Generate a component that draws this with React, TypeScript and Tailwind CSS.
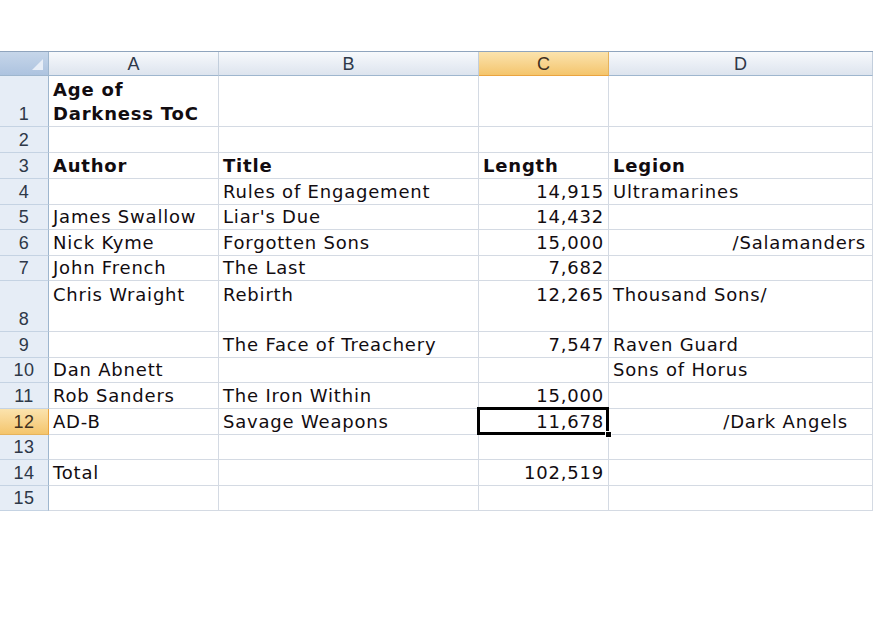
import React from "react";

type Row = {
  n: number;
  h: number;
  a?: string;
  b?: string;
  c?: string;
  d?: string;
  dRight?: string;
  bold?: boolean;
  top?: boolean;
};

const rows: Row[] = [
  { n: 1, h: 51, a: "Age of\nDarkness ToC", bold: true },
  { n: 2, h: 26 },
  { n: 3, h: 26, a: "Author", b: "Title", c: "Length", d: "Legion", bold: true },
  { n: 4, h: 26, b: "Rules of Engagement", c: "14,915", d: "Ultramarines" },
  { n: 5, h: 25, a: "James Swallow", b: "Liar's Due", c: "14,432" },
  { n: 6, h: 26, a: "Nick Kyme", b: "Forgotten Sons", c: "15,000", dRight: "/Salamanders" },
  { n: 7, h: 25, a: "John French", b: "The Last", c: "7,682" },
  { n: 8, h: 51, a: "Chris Wraight", b: "Rebirth", c: "12,265", d: "Thousand Sons/", top: true },
  { n: 9, h: 26, b: "The Face of Treachery", c: "7,547", d: "Raven Guard" },
  { n: 10, h: 25, a: "Dan Abnett", d: "Sons of Horus" },
  { n: 11, h: 26, a: "Rob Sanders", b: "The Iron Within", c: "15,000" },
  { n: 12, h: 26, a: "AD-B", b: "Savage Weapons", c: "11,678", dRight: "/Dark Angels" },
  { n: 13, h: 25 },
  { n: 14, h: 26, a: "Total", c: "102,519" },
  { n: 15, h: 25 },
];

const cols = [
  { key: "A", w: "w-[170px]" },
  { key: "B", w: "w-[260px]" },
  { key: "C", w: "w-[130px]" },
  { key: "D", w: "flex-1" },
];

const Cell = ({
  w,
  text,
  right,
  bold,
  top,
  pr,
}: {
  w: string;
  text?: string;
  right?: boolean;
  bold?: boolean;
  top?: boolean;
  pr?: string;
}) => (
  <div
    className={`${w} shrink-0 flex flex-col border-r border-b border-[#d4dae3] px-[4px] ${
      top ? "justify-start pt-[2px]" : "justify-end"
    } ${right ? "items-end" : "items-start"} ${pr ?? ""}`}
  >
    {text &&
      text.split("\n").map((line) => (
        <span
          key={line}
          className={`leading-[24px] whitespace-nowrap ${bold ? "font-bold" : ""}`}
        >
          {line}
        </span>
      ))}
  </div>
);

export default function App() {
  return (
    <div
      className="w-[873px] h-[627px] bg-white overflow-hidden pt-[51px] text-[18px] tracking-[0.8px] text-[#120c10]"
      style={{ fontFamily: '"DejaVu Sans", Verdana, sans-serif' }}
    >
      {/* column headers */}
      <div className="flex h-[25px] border-t border-[#8fa4bd]">
        <div className="w-[49px] shrink-0 relative bg-gradient-to-b from-[#c6d6ea] to-[#adc3df] border-r border-b border-[#9eb6ce]">
          <div className="absolute right-[5px] bottom-[5px] w-0 h-0 border-l-[11px] border-l-transparent border-b-[11px] border-b-[#e8eef7]" />
        </div>
        {cols.map((c) => (
          <div
            key={c.key}
            className={`${c.w} shrink-0 flex items-center justify-center pt-[1px] text-[18px] tracking-normal border-r border-b ${
              c.key === "C"
                ? "bg-gradient-to-b from-[#fbe3ad] to-[#f4c56c] border-r-[#e6b35c] border-b-[#eaa440] text-[#3e3020]"
                : "bg-gradient-to-b from-[#f7f9fc] to-[#dde4ee] border-r-[#c2cedc] border-b-[#9eb6ce] text-[#2e3848]"
            }`}
            style={{ fontFamily: '"Liberation Sans", Arial, sans-serif' }}
          >
            {c.key}
          </div>
        ))}
      </div>

      {rows.map((r) => (
        <div key={r.n} className="flex" style={{ height: r.h }}>
          <div
            className={`w-[49px] shrink-0 flex items-end justify-center leading-[24px] text-[18px] tracking-[0.5px] border-r border-b ${
              r.n === 12
                ? "bg-gradient-to-b from-[#fbe3ad] to-[#f4c56c] border-r-[#eaa440] border-b-[#e6b35c] text-[#3e3020]"
                : "bg-[#e6edf6] border-r-[#9eb6ce] border-b-[#c5d3e3] text-[#2e3848]"
            }`}
            style={{ fontFamily: '"Liberation Sans", Arial, sans-serif' }}
          >
            {r.n}
          </div>
          <Cell w="w-[170px]" text={r.a} bold={r.bold} top={r.top} />
          <Cell w="w-[260px]" text={r.b} bold={r.bold} top={r.top} />
          {r.n === 12 ? (
            <div className="w-[130px] shrink-0 relative flex flex-col justify-end items-end border-r border-b border-[#d4dae3] px-[4px]">
              <span className="leading-[24px]">{r.c}</span>
              <div className="absolute -left-[2px] -top-[2px] -right-[1px] -bottom-[1px] border-[3px] border-black" />
              <div className="absolute -right-[4px] -bottom-[4px] w-[7px] h-[7px] bg-black border border-white" />
            </div>
          ) : (
            <Cell
              w="w-[130px]"
              text={r.c}
              right={!r.bold}
              bold={r.bold}
              top={r.top}
            />
          )}
          {r.dRight ? (
            <Cell
              w="flex-1"
              text={r.dRight}
              right
              pr={r.n === 6 ? "pr-[6px]" : "pr-[24px]"}
            />
          ) : (
            <Cell w="flex-1" text={r.d} bold={r.bold} top={r.top} />
          )}
        </div>
      ))}
    </div>
  );
}
